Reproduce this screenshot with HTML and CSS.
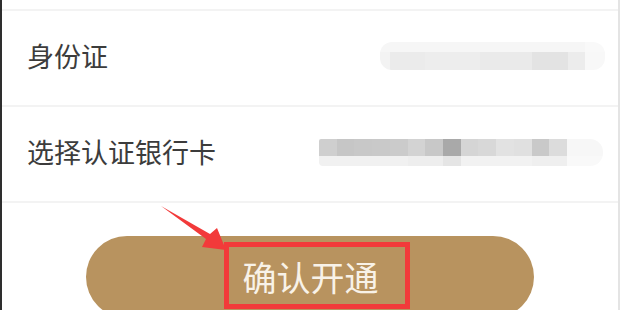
FILE: index.html
```html
<!DOCTYPE html>
<html lang="zh-CN">
<head>
<meta charset="utf-8">
<title>确认开通</title>
<link rel="stylesheet" href="styles.css">
</head>
<body>
<div class="screen">
  <div class="list">
    <div class="row">
      <span class="label">身份证</span>
      <span class="mosaic mosaic-id"></span>
    </div>
    <div class="row">
      <span class="label">选择认证银行卡</span>
      <span class="mosaic mosaic-card"></span>
    </div>
  </div>
  <div class="action">
    <button class="confirm" type="button">
      <span class="confirm-text">确认开通</span>
      <span class="highlight"></span>
    </button>
  </div>
  <svg class="arrow" width="620" height="310" viewBox="0 0 620 310" aria-hidden="true">
    <polygon points="161,206 210,234 217,228 226,250 202,247 206,239" fill="#f23a3a"/>
  </svg>
</div>
</body>
</html>
```
FILE: styles.css
```css
html, body {
  margin: 0;
  padding: 0;
  background: #ffffff;
}

.screen {
  position: relative;
  width: 620px;
  height: 310px;
  box-sizing: border-box;
  border-left: 2px solid #2e2e2e;
  border-right: 2px solid #e4e4e4;
  overflow: hidden;
  font-family: "Noto Sans CJK SC", "Noto Sans", sans-serif;
  background: #ffffff;
}

.list {
  padding-top: 9px;
  display: flex;
  flex-direction: column;
}

.row {
  display: flex;
  align-items: center;
  justify-content: space-between;
  height: 94px;
  border-top: 2px solid #f3f3f3;
  padding: 0 13px 0 25px;
}

.row:last-child {
  border-bottom: 2px solid #f3f3f3;
}

.label {
  font-size: 27px;
  color: #3c3c3c;
  line-height: 1;
  margin-bottom: 5px;
}

.mosaic {
  display: block;
  filter: blur(0.6px);
}

.mosaic-id {
  width: 225px;
  height: 28px;
  border-radius: 12px;
  margin-top: -4px;
  background:
    linear-gradient(to right,
      #f3f3f3 0 10px,
      #ebebeb 10px 45px,
      #ededed 45px 100px,
      #eaeaea 100px 152px,
      #e3e3e3 152px 188px,
      #ececec 188px 205px,
      #f8f8f8 205px 225px) 0 10px / 100% 18px no-repeat,
    linear-gradient(to right,
      #f6f6f6 0 205px,
      #f9f9f9 205px 225px) 0 0 / 100% 10px no-repeat;
}

.mosaic-card {
  width: 284px;
  height: 27px;
  margin-right: 2px;
  margin-top: -4px;
  border-radius: 2px 13px 13px 4px;
  background:
    linear-gradient(to right,
      #cfcfcf 0 18px,
      #c6c6c6 18px 35px,
      #c8c8c8 35px 53px,
      #c9c9c9 53px 71px,
      #cbcbcb 71px 89px,
      #d3d3d3 89px 106px,
      #c8c8c8 106px 124px,
      #a9a9a9 124px 142px,
      #d5d5d5 142px 159px,
      #d8d8d8 159px 177px,
      #e2e2e2 177px 195px,
      #e0e0e0 195px 213px,
      #c9c9c9 213px 230px,
      #dcdcdc 230px 248px,
      #f7f7f7 248px 284px) 0 0 / 100% 17px no-repeat,
    linear-gradient(to right,
      #f1f1f1 0 89px,
      #eeeeee 89px 124px,
      #e5e5e5 124px 142px,
      #f2f2f2 142px 213px,
      #efefef 213px 248px,
      #f9f9f9 248px 284px) 0 17px / 100% 10px no-repeat;
}

.action {
  display: flex;
  justify-content: center;
  padding-top: 33px;
}

.confirm {
  position: relative;
  width: 448px;
  height: 82px;
  border: none;
  border-radius: 41px;
  background: #b8935f;
  padding: 0;
  margin: 0;
  display: flex;
  align-items: center;
  justify-content: center;
  font-family: "Noto Sans CJK SC", "Noto Sans", sans-serif;
}

.confirm-text {
  font-size: 34px;
  line-height: 1;
  color: #f8f2e8;
  margin-left: 1px;
}

.highlight {
  position: absolute;
  left: 138px;
  top: 6px;
  width: 186px;
  height: 67px;
  box-sizing: border-box;
  border: 5px solid #f23a3a;
}

.arrow {
  position: absolute;
  left: -2px;
  top: 0;
  pointer-events: none;
}
```
